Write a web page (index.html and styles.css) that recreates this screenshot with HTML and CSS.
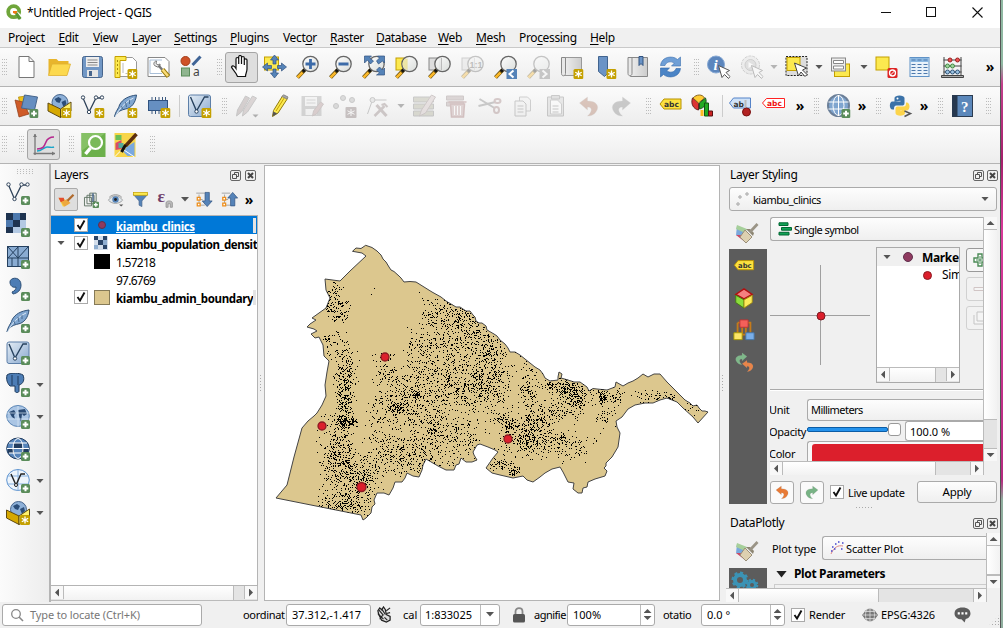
FILE: index.html
```html
<!DOCTYPE html>
<html lang="en">
<head>
<meta charset="utf-8">
<title>QGIS</title>
<link rel="stylesheet" href="styles.css">
</head>
<body>
<svg class="defs" width="0" height="0">
  <defs>
    <linearGradient id="lens" x1="0" y1="0" x2="1" y2="1"><stop offset="0" stop-color="#fff"/><stop offset="1" stop-color="#d5d9d6"/></linearGradient>
    <linearGradient id="blue" x1="0" y1="0" x2="1" y2="1"><stop offset="0" stop-color="#e4edf5"/><stop offset="1" stop-color="#8aa9cf"/></linearGradient>
    <linearGradient id="page" x1="0" y1="0" x2="1" y2="0"><stop offset="0" stop-color="#eee"/><stop offset="1" stop-color="#ccc"/></linearGradient>
  </defs>
</svg>
<svg class="symbols">
  <symbol id="plus" viewBox="0 0 24 24"><rect x="15" y="15" width="9" height="9" rx="1.5" fill="#5a8c5a"/><path d="M19.5 16.7v5.6M16.7 19.5h5.6" stroke="#fff" stroke-width="2"/></symbol>
  <symbol id="star" viewBox="0 0 24 24"><rect x="14" y="14" width="10" height="10" rx="1.5" fill="#c4a000"/><path d="M19 15.500v7M15.800 17.200l6.400 3.600M22.200 17.200l-6.400 3.600" stroke="#fff" stroke-width="1.300"/></symbol>
  <symbol id="new" viewBox="0 0 24 24"><path d="M4.500 1.500h10l5 5v16h-15zM14.500 1.500v5h5" fill="#fff" stroke="#777"/></symbol>
  <symbol id="open" viewBox="0 0 24 24"><path d="M1 20V4h8l2 2h10v4" fill="#e8b52c"/><path d="M1 20.500L4.500 9H23l-3.500 11.500z" fill="#fcd94f" stroke="#e0b030" stroke-width=".8"/></symbol>
  <symbol id="save" viewBox="0 0 24 24"><rect x="2" y="1.500" width="20" height="21" rx="2" fill="#7197c5" stroke="#47658c"/><rect x="5.500" y="2" width="13" height="10" fill="#eee"/><path d="M7 5h10M7 7.500h10M7 10h10" stroke="#888"/><path d="M6.500 15h11v7h-11z" fill="#e5e5e5"/><path d="M8.500 16h3v5h-3z" fill="#47658c"/></symbol>
  <symbol id="layout" viewBox="0 0 24 24"><path d="M5 2.500h14l4 4v15H5z" fill="#fff" stroke="#999"/><path d="M1.500 1.500h11v4h-6v17h-5z" fill="#fce94f" stroke="#c4a000"/><path d="M4 5v2M4 9v2M4 13v2M4 17v2" stroke="#a88a10"/><path d="M9.500 8v10M12 18.500h2" stroke="#bbb"/><use href="#star"/></symbol>
  <symbol id="layoutmgr" viewBox="0 0 24 24"><path d="M1.500 2.500h17l4 4v15h-21z" fill="#fff" stroke="#888"/><path d="M3.500 5h12M3.500 18.500h12M3.500 5v13.500" stroke="#a9bfd8"/><path d="M8 10.500c-1.500-2 0-4.500 2-4.500l-.5 2.500 2 1.500 2-1c.5 2-1 3-2.500 3z" fill="#eee" stroke="#777" stroke-width="1"/><path d="M12 10.500l4 4.500" stroke="#777" stroke-width="2.500"/><path d="M16 14.500l6 7" stroke="#9a7d10" stroke-width="4.500"/><path d="M16 14.500l5.500 6.500" stroke="#fbdc78" stroke-width="2.500"/></symbol>
  <symbol id="style" viewBox="0 0 24 24"><circle cx="6" cy="6" r="4.500" fill="#cf5228" stroke="#a23c18"/><path d="M13 10l8-8.500" stroke="#3f6496" stroke-width="3"/><rect x="2" y="13" width="8" height="8" fill="#8fb58f" stroke="#5a8c5a"/><text x="13.500" y="21" class="ga">a</text></symbol>
  <symbol id="hand" viewBox="0 0 24 24"><path d="M7.500 21.500C6 17 2 14 1.500 12c1-2 3-1 4.500 1.500V4c0-2 2.500-2 2.700 0v5-7c0-2 2.800-2 2.800 0v7-6c0-2 2.800-2 2.800 0v7-5c0-1.600 2.700-1.600 2.700 0v9c0 3-1.500 4.500-1.500 7.500z" fill="#fff" stroke="#111" stroke-width="1.200"/></symbol>
  <symbol id="pansel" viewBox="0 0 24 24"><rect x="2" y="2" width="14" height="13" fill="#fce94f" stroke="#c4a000"/><path d="M12 0l4 5h-2.500v4h-3V5H8zM12 23l4-5h-2.500v-4h-3v4H8zM0 12l5-4v2.500h4v3H5V16zM24 12l-5-4v2.500h-4v3h4V16z" fill="#5583b8" stroke="#30527f" stroke-width=".7"/></symbol>
  <symbol id="glass" viewBox="0 0 24 24"><path d="M9.500 14.500L2 22.500" stroke="#5f4a10" stroke-width="4"/><path d="M7 17.500L2 22.500" stroke="#fbb829" stroke-width="2.500"/><path d="M9.500 14.500l-2 2" stroke="#111" stroke-width="3"/><circle cx="15" cy="9" r="7.700" fill="url(#lens)" fill-opacity=".85" stroke="#666" stroke-width="1.300"/></symbol>
  <symbol id="zin" viewBox="0 0 24 24"><use href="#glass"/><path d="M15 4v10M10 9h10" stroke="#3c6ba8" stroke-width="2.800"/></symbol>
  <symbol id="zout" viewBox="0 0 24 24"><use href="#glass"/><path d="M10 9h10" stroke="#3c6ba8" stroke-width="3"/></symbol>
  <symbol id="zfull" viewBox="0 0 24 24"><use href="#glass"/><path d="M3 1h7L8 3l4 3-3 3-3-4-3 3zM23 1v7l-2-2-4 3-2-3 3-3-2-2zM23 20h-8l3-2-3-3 3-3 3 3 2-2z" fill="#5583b8" stroke="#30527f" stroke-width=".7"/></symbol>
  <symbol id="zsel" viewBox="0 0 24 24"><rect x="1.500" y="3" width="11" height="12" fill="#fce94f" stroke="#c4a000"/><use href="#glass"/><path d="M10 4h3v11c-3-1-5-4-5-6s1-4 2-5z" fill="#eadf90" opacity=".7"/></symbol>
  <symbol id="zlay" viewBox="0 0 24 24"><rect x="1.500" y="3" width="11" height="12" fill="#ddd" stroke="#888"/><use href="#glass"/><path d="M14 3v12" stroke="#bbb"/></symbol>
  <symbol id="z11" viewBox="0 0 24 24"><use href="#zlay"/><text x="9" y="12.500" class="g11">1:1</text></symbol>
  <symbol id="zlast" viewBox="0 0 24 24"><use href="#glass"/><rect x="13" y="14" width="10.500" height="10" fill="#5583b8"/><path d="M20 15.500l-4 3.500 4 3.500" fill="none" stroke="#fff" stroke-width="2"/></symbol>
  <symbol id="znext" viewBox="0 0 24 24"><use href="#glass"/><rect x="13" y="14" width="10.500" height="10" fill="#777"/><path d="M16 15.500l4 3.500-4 3.500" fill="none" stroke="#fff" stroke-width="2"/></symbol>
  <symbol id="mapview" viewBox="0 0 24 24"><path d="M5 2.500h17v18H5z" fill="url(#page)" stroke="#999"/><path d="M2 2.500h4v16c0 3-4 3-4 0z" fill="#e8e8e8" stroke="#888"/><use href="#star"/></symbol>
  <symbol id="bm" viewBox="0 0 24 24"><path d="M6 1.500h9v17l-3 3-6-5z" fill="#6a93c6" stroke="#41648f"/><use href="#star"/></symbol>
  <symbol id="bm2" viewBox="0 0 24 24"><path d="M5 2.500h17v19H5z" fill="url(#page)" stroke="#888"/><path d="M2.500 2.500h4v16c0 3-4 3-4 0z" fill="#e8e8e8" stroke="#888"/><path d="M13.500 1.500h4v9l-2-2-2 2z" fill="#6a93c6" stroke="#30527f"/></symbol>
  <symbol id="refresh" viewBox="0 0 24 24"><path d="M2 10.500C3 1.500 14 0 19 4.500l3-2.500V11H13l2.700-2.700C12.500 5.500 7.500 7 6.500 10.500z" fill="#6f9fd6" stroke="#3a6fae" stroke-width=".6"/><path d="M22 13.500c-1 9-12 10.500-17 6l-3 2.500V13H11l-2.700 2.700c3.200 2.800 8.200 1.300 9.200-2.200z" fill="#4a84c6" stroke="#2e64a8" stroke-width=".6"/></symbol>
  <symbol id="arrow" viewBox="0 0 24 24"><path d="M12 10.500l3.500 12 2.500-3 4 4 1.500-2-4-4 3.500-2z" fill="#fff" stroke="#555"/></symbol>
  <symbol id="info" viewBox="0 0 24 24"><circle cx="9.500" cy="9.500" r="8.500" fill="#5c86bd" stroke="#86a8d3"/><text x="7" y="15" class="gi">i</text><use href="#arrow"/></symbol>
  <symbol id="action" viewBox="0 0 24 24"><circle cx="11" cy="10" r="9" fill="#ddd" stroke="#888" stroke-dasharray="3 1"/><circle cx="11" cy="10" r="5.500" fill="#bbb" stroke="#888"/><path d="M9 7l5 3-5 3z" fill="#fff"/><use href="#arrow"/></symbol>
  <symbol id="select" viewBox="0 0 24 24"><rect x="1.500" y="1.500" width="21" height="19" fill="#ddd" stroke="#222" stroke-dasharray="2 1.200"/><rect x="2.500" y="2.500" width="13" height="13" fill="#fce94f" stroke="#c4a000"/><path d="M10 8l4 13 2.500-4 4 4.500 2-2-4.500-4.500L22 13z" fill="#fff" stroke="#444"/></symbol>
  <symbol id="selform" viewBox="0 0 24 24"><rect x="5" y="9" width="15" height="12.500" fill="#fce94f" stroke="#c4a000"/><rect x="2" y="3" width="14" height="13" fill="#eee" stroke="#888"/><path d="M4 5.500h10v3H4zM4 11h10v3H4z" fill="#fff" stroke="#888"/></symbol>
  <symbol id="desel" viewBox="0 0 24 24"><rect x="1.500" y="2" width="13" height="13" fill="#fce94f" stroke="#c4a000"/><rect x="13" y="13" width="10" height="10" rx="1.500" fill="#d22"/><circle cx="18" cy="18" r="3" fill="none" stroke="#fff" stroke-width="1.300"/><path d="M16 20l4-4" stroke="#fff"/></symbol>
  <symbol id="table" viewBox="0 0 24 24"><rect x="2.500" y="2.500" width="19" height="19" fill="#e9f2fa" stroke="#5f92c6"/><rect x="3" y="3" width="18" height="4" fill="#8cb9e2"/><path d="M4 5h4M10 5h4M16 5h4M4 9.500h4M10 9.500h4M16 9.500h4M4 12.500h4M10 12.500h4M16 12.500h4M4 15.500h4M10 15.500h4M16 15.500h4M4 18.500h4M10 18.500h4M16 18.500h4" stroke="#4c79ad"/></symbol>
  <symbol id="abacus" viewBox="0 0 24 24"><path d="M3.500 2v18M20.500 2v18M3 5h18M3 11h18M3 17h18" stroke="#444"/><path d="M1 20.500h22v2H1z" fill="#aaa" stroke="#444"/><g fill="#e55" stroke="#922"><circle cx="9.500" cy="5" r="2"/><circle cx="17" cy="5" r="2"/></g><g fill="#9cd49c" stroke="#484"><circle cx="7" cy="11" r="2"/><circle cx="12" cy="11" r="2"/></g><g fill="#9cc4e4" stroke="#357"><circle cx="7" cy="17" r="2"/><circle cx="12" cy="17" r="2"/><circle cx="17" cy="17" r="2"/></g></symbol>
  <symbol id="dsm" viewBox="0 0 24 24"><path d="M4 3l8-1 4 13-9 3z" fill="#f0c419" stroke="#ad8500" stroke-width=".7"/><path d="M.5 6l8 2 6 12-10 3z" fill="#cf5b28" stroke="#8c3a14" stroke-width=".7"/><path d="M10 1l13 2-3 13-13-2z" fill="#668fc1" stroke="#47658c"/><use href="#plus"/></symbol>
  <symbol id="gpkg" viewBox="0 0 24 24"><circle cx="12.500" cy="8.500" r="8" fill="#8db0d8" stroke="#47658c"/><path d="M7 5l4-2 3 2-2 4-3-1zM14 8l4-2 1 4-3 3z" fill="#2b4d78"/><path d="M.5 9L13 15v8.500L.5 17z" fill="#d6a800" stroke="#5f4a10"/><path d="M13 15L23.500 8v9L13 23.500z" fill="#fff16e" stroke="#5f4a10"/><use href="#star"/></symbol>
  <symbol id="vee" viewBox="0 0 24 24"><path d="M2.500 4l6 14 7-14h6" fill="none" stroke="#30435a" stroke-width="1.300"/><g fill="#fff" stroke="#30435a"><circle cx="2.500" cy="3.500" r="1.700"/><circle cx="8.500" cy="18" r="1.700"/><circle cx="15.500" cy="3.500" r="1.700"/><circle cx="21.500" cy="3.500" r="1.700"/></g></symbol>
  <symbol id="veestar" viewBox="0 0 24 24"><use href="#vee"/><use href="#star"/></symbol>
  <symbol id="veeplus" viewBox="0 0 24 24"><use href="#vee"/><use href="#plus"/></symbol>
  <symbol id="feather" viewBox="0 0 24 24"><path d="M1 23c1-6 4-8 5-12C9 5 15 2 23 1c-1 8-5 13-11 14-4 1-8 2-11 8z" fill="#7fa5cf" stroke="#2f5178"/><path d="M1.500 23C6 14 12 8 20 4" stroke="#dde9f5" fill="none"/><path d="M8 12l1 3M12 8l1 5M16 6v4" stroke="#2f5178" stroke-width=".7"/></symbol>
  <symbol id="feastar" viewBox="0 0 24 24"><use href="#feather"/><use href="#star"/></symbol>
  <symbol id="feaplus" viewBox="0 0 24 24"><use href="#feather"/><use href="#plus"/></symbol>
  <symbol id="chip" viewBox="0 0 24 24"><path d="M5.500 3v17M9 3v17M12.500 3v17M16 3v17M19 3v17" stroke="#3c5a80"/><rect x="2" y="6.500" width="19" height="10" fill="#668fc1" stroke="#30527f"/><use href="#star"/></symbol>
  <symbol id="virt" viewBox="0 0 24 24"><rect x="1" y="1" width="22" height="21.500" rx="2" fill="url(#blue)" stroke="#5d7fa8"/><path d="M3 3l6 14 8-14h4" fill="none" stroke="#27425f" stroke-width="1.400"/><circle cx="9" cy="17.500" r="1.700" fill="#fff" stroke="#27425f"/></symbol>
  <symbol id="virtstar" viewBox="0 0 24 24"><use href="#virt"/><use href="#star"/></symbol>
  <symbol id="virtplus" viewBox="0 0 24 24"><use href="#virt"/><use href="#plus"/></symbol>
  <symbol id="pencils" viewBox="0 0 24 24"><path d="M2 22l1-6 8-14 4 2-8 14z" fill="#988" stroke="#777"/><path d="M8 22l1-6 9-14 4 2-9 14z" fill="#a99" stroke="#777"/><path d="M18 20.500h6l-3 3z" fill="#333"/></symbol>
  <symbol id="pencil" viewBox="0 0 24 24"><path d="M5 22.500l1-6L15 2l5 2.500L10.500 19z" fill="#fce94f" stroke="#8f7a10"/><path d="M8.500 17L17 3.500" stroke="#c4a000"/><path d="M5 22.500l.8-5 4 2z" fill="#555"/><path d="M14.500 2.500L16 .8 20.500 3l-1 2z" fill="#aaa" stroke="#888"/></symbol>
  <symbol id="saveed" viewBox="0 0 24 24"><path d="M1 2h20v20H1z" fill="#999"/><path d="M4.500 3h12v9h-12zM5 15h11v6H5z" fill="#eee"/><path d="M6 6h9M6 9h9" stroke="#999"/><path d="M12 22l1-5 7-9 3 2-7 10z" fill="#a88" stroke="#877"/></symbol>
  <symbol id="points" viewBox="0 0 24 24"><g fill="#aaa" stroke="#777"><circle cx="2.500" cy="12" r="2.500"/><circle cx="9.500" cy="4" r="2.500"/><circle cx="18.500" cy="6" r="2.500"/></g><rect x="12" y="13" width="11" height="11" rx="1" fill="#766"/><path d="M17.500 15v7M14 16.800l7 3.500M21 16.800l-7 3.500" stroke="#fff"/></symbol>
  <symbol id="vertex" viewBox="0 0 24 24"><path d="M1 20L6 6h14" stroke="#777" fill="none"/><circle cx="6" cy="6" r="2.500" fill="#ccc" stroke="#777"/><path d="M10 11l10 11" stroke="#877" stroke-width="3"/><path d="M18 12L8 22" stroke="#877" stroke-width="2.500"/><path d="M15 11l3-1 3 3" stroke="#877" stroke-width="2" fill="none"/></symbol>
  <symbol id="editrows" viewBox="0 0 24 24"><path d="M2 3h20v5H2zM2 10h20v5H2zM2 17h20v5H2z" fill="#a8a890" stroke="#777"/><path d="M8 22l2-6L20 1l4 2-10 16z" fill="#cbb" stroke="#877"/></symbol>
  <symbol id="trash" viewBox="0 0 24 24"><path d="M2 2h17v4H2zM2 8h17v4H2z" fill="#a99" stroke="#877"/><path d="M4 8h18M6 10h14l-1 13H7z" fill="#b99" stroke="#966" stroke-width="1.500"/><path d="M10 12v9M13 12v9M16 12v9" stroke="#fff"/></symbol>
  <symbol id="cut" viewBox="0 0 24 24"><path d="M2 5l15 9M1 12l17-4" stroke="#777" stroke-width="2"/><g fill="none" stroke="#977" stroke-width="2"><ellipse cx="20" cy="7" rx="3" ry="2"/><ellipse cx="19" cy="16" rx="2.500" ry="3"/></g></symbol>
  <symbol id="copy" viewBox="0 0 24 24"><path d="M9 3h8l3 3v11H9z" fill="#eee" stroke="#888"/><path d="M4.500 7h8l3 3v12h-11z" fill="#eee" stroke="#777"/><path d="M7 12h6M7 15h6M7 18h6" stroke="#777"/></symbol>
  <symbol id="paste" viewBox="0 0 24 24"><path d="M4 3h16v19H4z" fill="#ccc" stroke="#777"/><path d="M7 6h7l4 4v10H7z" fill="#fff" stroke="#888"/><path d="M8 1.500h8V5H8z" fill="#bbb" stroke="#777"/><path d="M9 12h6M9 15h6M9 18h6" stroke="#777"/></symbol>
  <symbol id="undo" viewBox="0 0 24 24"><path d="M3 9l8-6v4c9 0 12 5 9 10-2 4-6 5-9 5 4-3 6-9 0-9v3z" fill="currentColor" stroke="#8886" stroke-width=".6"/></symbol>
  <symbol id="redo" viewBox="0 0 24 24"><path d="M21 9l-8-6v4C4 7 1 12 4 17c2 4 6 5 9 5-4-3-6-9 0-9v3z" fill="currentColor" stroke="#8886" stroke-width=".6"/></symbol>
  <symbol id="tag" viewBox="0 0 24 24"><path d="M1.500 10l4-5h17v10h-17z" fill="#fce13f" stroke="#b89200"/><text x="5.500" y="13" class="gt">abc</text></symbol>
  <symbol id="diag" viewBox="0 0 24 24"><path d="M7 9L1 4c-2 6 1 11 6 12z" fill="#d33" stroke="#622"/><path d="M7 9L1.500 4C5 0 11 0 13 4z" fill="#fc3" stroke="#862"/><path d="M8 9l6-5c2 5-1 10-6 11z" fill="#2a2" stroke="#252"/><path d="M9 16h3v6H9z" fill="#fb2"/><path d="M13 9h4v13h-4z" fill="#2a2" stroke="#151"/><path d="M17 17h4v5h-4z" fill="#c22" stroke="#511"/></symbol>
  <symbol id="tagpin" viewBox="0 0 24 24"><path d="M1 9l4-5h17v10H5z" fill="#cfe2f8" stroke="#5583c8"/><text x="5" y="12.500" class="gt">ab</text><path d="M17 6v10" stroke="#bbb" stroke-width="2"/><circle cx="18" cy="18" r="4" fill="#b22222" stroke="#7a1010"/></symbol>
  <symbol id="tagred" viewBox="0 0 24 24"><path d="M1 9l4-4.500h18v9H5z" fill="#fff" stroke="#f22"/><text x="5.500" y="12" class="gr">abc</text></symbol>
  <symbol id="globe" viewBox="0 0 24 24"><circle cx="12" cy="11.500" r="10.500" fill="#7fa5cf" stroke="#6b7f98" stroke-width="2"/><path d="M12 1v21M2 8h20M2 15h20" stroke="#fff"/><ellipse cx="12" cy="11.500" rx="5.500" ry="10" fill="none" stroke="#fff"/><use href="#plus"/></symbol>
  <symbol id="python" viewBox="0 0 24 24"><path d="M6 7.500V4c0-3.500 10-3.500 10 0v5c0 2-1 2.500-3 2.500H8c-2 0-2.500 1-2.500 4H4C.5 15.500.5 7.500 4 7.500h8v-.7z" fill="#3b72a8"/><path d="M16.500 15v4c0 3.500-9.500 3.500-9.500 0v-4c0-2 1-2.500 3-2.500h5c2 0 2.500-1 2.500-4H18c4 0 4 8 0 8h-6v.7z" fill="#fcd44b"/><circle cx="9" cy="4.500" r="1" fill="#fff"/><path d="M16 17l6 2.500-6 3" fill="none" stroke="#555" stroke-width="1.500"/></symbol>
  <symbol id="help" viewBox="0 0 24 24"><rect x="2" y="1.500" width="20" height="21" fill="#5b87ba" stroke="#2b3b50"/><path d="M2 1.500h5v21H2z" fill="#26384f"/><text x="10.500" y="17.500" class="gq">?</text></symbol>
  <symbol id="plot" viewBox="0 0 24 24"><path d="M3 22V1M1.500 20.500H23" stroke="#777" stroke-width="1.300"/><path d="M1 4l2-3 2 3zM20 18.500l3 2-3 2z" fill="#777"/><path d="M5 18c5 0 7-4 10-4 3 0 5 1 7 0" stroke="#19a5c9" stroke-width="1.400" fill="none"/><path d="M5 16c6 0 7-2 9-7 1.500-4 4-5 8-5" stroke="#b5288e" stroke-width="1.600" fill="none"/></symbol>
  <symbol id="greenq" viewBox="0 0 24 24"><rect width="24" height="24" fill="#6cb04b"/><path d="M0 0h24L0 18z" fill="#86c166"/><path d="M9 15l-5 6" stroke="#fff" stroke-width="3.500"/><circle cx="14" cy="9.500" r="6.500" fill="#7ab95a" stroke="#fff" stroke-width="2.200"/></symbol>
  <symbol id="osm" viewBox="0 0 24 24"><rect width="21" height="24" fill="#f7d549"/><path d="M1 2h6v5H1z" fill="#6abf59"/><path d="M1 10l6-3v9l-6 1z" fill="#d94b6a"/><path d="M4 10h5v5H4z" fill="#5a9"/><path d="M12 14l8-5v14h-7l-4-4z" fill="#79a8e0"/><path d="M0 24l8-8 12 8" stroke="#fff" fill="none"/><path d="M22 1L11 13" stroke="#5b2e10" stroke-width="3.500"/><path d="M11 12l-4 7" stroke="#111" stroke-width="3"/></symbol>
  <symbol id="rasplus" viewBox="0 0 24 24"><rect width="20" height="20" fill="#b3c9e3"/><path d="M0 0h7v7H0zM14 0h6v7h-6zM7 7h7v7H7zM0 14h7v6H0z" fill="#1e3350"/><path d="M7 0h7v7H7zM0 7h7v7H0z" fill="#4d79ae"/><use href="#plus"/></symbol>
  <symbol id="mesh" viewBox="0 0 24 24"><rect x="1.500" y="1.500" width="21" height="20" fill="#8aacd2" stroke="#25405f"/><path d="M12 1.500v20M1.500 13h21M2 2l10 11M12 2L2 13M12 13L22 2M6 13v9" stroke="#25405f"/><use href="#plus"/></symbol>
  <symbol id="comma" viewBox="0 0 24 24"><path d="M4 5c0-5 11-6 11 3 0 5-3 8-8 9l-1-2c3-1 4-3 4-5-3 1-6-1-6-5z" fill="#4d7db5" stroke="#2e5077"/><use href="#plus"/></symbol>
  <symbol id="eleph" viewBox="0 0 24 24"><path d="M1 2c4-3 13-2 16 0 2 5 0 9-4 10v6c0 2-4 2-4 0v-5H4C1 10 0 6 1 2z" fill="#4d7db5" stroke="#1f3b5c"/><path d="M6 2v10M12 3v9" stroke="#1f3b5c"/><use href="#plus"/></symbol>
  <symbol id="wms" viewBox="0 0 24 24"><ellipse cx="12" cy="11" rx="11.300" ry="10.500" fill="#aac5e4" stroke="#5c86b5"/><path d="M3 7l5-2 2 3-2 2 1 4-3-2zM12 5l7-1 2 5-3 2-2-2-1 8-2-6z" fill="#294a73"/><path d="M12 1v21M1 8h22M1 14h22" stroke="#dbe8f5" stroke-width=".7"/><use href="#plus"/></symbol>
  <symbol id="wcs" viewBox="0 0 24 24"><ellipse cx="12" cy="11.500" rx="11.300" ry="10.500" fill="#5684ba" stroke="#223d5f"/><path d="M8 6h8v5H8zM2 11h6v5H2zM16 11h6v5h-6z" fill="#223d5f"/><path d="M1 11.500h22M3 6h18M3 16h18" stroke="#fff" stroke-width="1.200"/><ellipse cx="12" cy="11.500" rx="5" ry="10" fill="none" stroke="#fff"/><use href="#plus"/></symbol>
  <symbol id="wfs" viewBox="0 0 24 24"><ellipse cx="12" cy="11" rx="11.300" ry="10.500" fill="#eef5fc" stroke="#5e93cf"/><path d="M1 7h22M1 15h22M12 1v21" stroke="#86b0dd"/><path d="M5 5l5 11 5-11h4" fill="none" stroke="#222" stroke-width="1.400"/><circle cx="10" cy="16" r="1.500" fill="#fff" stroke="#222"/><use href="#plus"/></symbol>
  <symbol id="brush" viewBox="0 0 24 24"><path d="M2 5l9 4-2 10-8-5z" fill="#7aa8dc"/><path d="M2 4l10 4-2 4-9-4z" fill="#a6cf9a"/><path d="M1 14h9l0 7z" fill="#cc4a64"/><path d="M10 9l7 7-6 6-6-6z" fill="#ddd0b0" stroke="#9a8f78"/><path d="M11 8l7 7 1-3-4-4z" fill="#8d8673"/><path d="M15 11l7.500-8" stroke="#9a9486" stroke-width="2.800"/></symbol>
  <symbol id="brushl" viewBox="0 0 24 24"><path d="M2 9l8 2 6 6-8 4z" fill="#f6d23c"/><path d="M2 9h7l1 4-5 2z" fill="#e34f2c"/><path d="M6 15l7-4 5 5-8 5z" fill="#eda83f"/><path d="M14 13l8-8" stroke="#b06a2c" stroke-width="3"/></symbol>
  <symbol id="group" viewBox="0 0 24 24"><path d="M3.500 9h10v12h-10zM7 6h10v12H7zM11 3h9v12h-9z" fill="none" stroke="#5f7263" stroke-width="1.300"/><path d="M15.500 3v12" stroke="#47658c" stroke-width="2"/><use href="#plus"/></symbol>
  <symbol id="eye" viewBox="0 0 24 24"><path d="M2 13c5-8 15-8 20 0-5 6-15 6-20 0z" fill="#dfe6ea" stroke="#888"/><circle cx="12" cy="12" r="4.500" fill="#5583b8"/><circle cx="12" cy="12" r="2" fill="#222"/><path d="M3 9c5-5 13-5 18 0" fill="none" stroke="#777"/><path d="M17 19h6l-3 3z" fill="#555"/></symbol>
  <symbol id="funnel" viewBox="0 0 24 24"><path d="M2 5h20l-8 9v8l-4-2v-6z" fill="#5583b8" stroke="#47658c"/><rect x="2" y="2" width="20" height="4" fill="#fce94f" stroke="#c4a000"/></symbol>
  <symbol id="eps" viewBox="0 0 24 24"><text x="0" y="15" class="ge">ε</text><path d="M12 23v-6c0-4 9-4 9 0v6h-3v-5h-3v5z" fill="#bbb" stroke="#888"/></symbol>
  <symbol id="expand" viewBox="0 0 24 24"><path d="M1 3h12M5 5v16M5 12h5M5 20h8" stroke="#888"/><path d="M2.500 9h4v4h-4zM2.500 17h4v4h-4z" fill="#fff" stroke="#ee8e1b" stroke-width="1.800"/><path d="M13.500 2h6v12h4L16.500 22 9.500 14h4z" fill="#5583b8" stroke="#30527f"/></symbol>
  <symbol id="collapse" viewBox="0 0 24 24"><path d="M1 3h12M5 5v16M5 12h5M5 20h8" stroke="#888"/><path d="M2.500 9h4v4h-4zM2.500 17h4v4h-4z" fill="#fff" stroke="#ee8e1b" stroke-width="1.800"/><path d="M13.500 21h6V10h4L16.500 2 9.500 10h4z" fill="#5583b8" stroke="#30527f"/></symbol>
  <symbol id="ras" viewBox="0 0 14 14"><rect width="14" height="14" fill="#d3deeb"/><path d="M0 0h4v4H0zM9 0h4v4H9zM4 4h5v5H4zM9 9h4v4H9z" fill="#2a4568"/><path d="M0 9h4v4H0zM9 4h4v5H9z" fill="#8faed0"/></symbol>
  <symbol id="cube" viewBox="0 0 24 24"><path d="M12 2l9 6-9 5-9-5z" fill="#f58080" stroke="#b01010" stroke-width="1.500"/><path d="M3 9l9 5v9l-9-6z" fill="#8bdd3c" stroke="#447a10"/><path d="M21 9l-9 5v9l9-6z" fill="#fcea5a" stroke="#a08a10"/></symbol>
  <symbol id="tree3" viewBox="0 0 24 24"><path d="M5 4h14v16M5 4v16M10 8v9h4V8" stroke="#c47a1a" stroke-width="2" fill="none"/><path d="M7.500 1h9v8h-9z" fill="#f4605a" stroke="#b33"/><path d="M1 15h9v7.500H1z" fill="#fce568" stroke="#a90"/><path d="M14 15h9v7.500h-9z" fill="#7aaee8" stroke="#47a"/></symbol>
  <symbol id="gears" viewBox="0 0 38 20"><g fill="none" stroke="#3b93b5"><circle cx="11" cy="12" r="5" stroke-width="4"/><circle cx="11" cy="12" r="7.300" stroke-width="2.500" stroke-dasharray="3 2.700"/><circle cx="23" cy="17" r="3.500" stroke-width="3"/><circle cx="23" cy="17" r="5.300" stroke-width="2" stroke-dasharray="2.200 2"/></g></symbol>
  <symbol id="float" viewBox="0 0 11 11"><rect x=".5" y=".5" width="10" height="10" rx="1.500" fill="none" stroke="#666"/><path d="M4.500 4.500v-2h4v4h-2M2.500 4.500h4v4h-4z" fill="none" stroke="#555"/></symbol>
  <symbol id="close" viewBox="0 0 11 11"><rect x=".5" y=".5" width="10" height="10" rx="1.500" fill="none" stroke="#666"/><path d="M3 3l5 5M8 3L3 8" stroke="#444" stroke-width="2"/></symbol>
  <symbol id="check" viewBox="0 0 14 14"><rect x=".5" y=".5" width="13" height="13" fill="#fff" stroke="#aaa"/><path d="M3.500 7l2.500 3.500 4.500-8" stroke="#111" stroke-width="1.900" fill="none"/></symbol>
</svg>

<div class="screen">
<div class="window">
  <header class="titlebar">
    <svg class="logo" viewBox="0 0 16 16"><circle cx="7.700" cy="7.700" r="5.500" fill="none" stroke="#6fa53a" stroke-width="3.800"/><path d="M8 8h4l4 4v4h-3z" fill="#fff"/><path d="M8 8h3l4.500 6-1.500 1.500h-2z" fill="#589632"/><path d="M7 7h4v1.500L9.500 10 7 9z" fill="#ee7913"/></svg>
    <span class="title">*Untitled Project - QGIS</span>
    <svg class="winbtns" viewBox="0 0 120 28"><path d="M11 12.500h10M102.500 7.500l10 10M112.500 7.500l-10 10" stroke="#111" fill="none" stroke-width="1.100"/><rect x="56.500" y="7.500" width="9" height="9" fill="none" stroke="#111"/></svg>
  </header>
  <nav class="menubar">
    <span>Pro<u>j</u>ect</span><span><u>E</u>dit</span><span><u>V</u>iew</span><span><u>L</u>ayer</span><span><u>S</u>ettings</span><span><u>P</u>lugins</span><span>Vect<u>o</u>r</span><span><u>R</u>aster</span><span><u>D</u>atabase</span><span><u>W</u>eb</span><span><u>M</u>esh</span><span>Pro<u>c</u>essing</span><span><u>H</u>elp</span>
  </nav>

  <div class="bar">
    <i class="g w10"></i>
    <svg class="c"><use href="#new"/></svg><svg class="c"><use href="#open"/></svg><svg class="c"><use href="#save"/></svg><svg class="c"><use href="#layout"/></svg><svg class="c"><use href="#layoutmgr"/></svg><svg class="c"><use href="#style"/></svg>
    <i class="g w17"></i>
    <span class="btn"><svg class="i24"><use href="#hand"/></svg></span><svg class="c"><use href="#pansel"/></svg><svg class="c"><use href="#zin"/></svg><svg class="c"><use href="#zout"/></svg><svg class="c"><use href="#zfull"/></svg><svg class="c"><use href="#zsel"/></svg><svg class="c"><use href="#zlay"/></svg><svg class="c off"><use href="#z11"/></svg><svg class="c"><use href="#zlast"/></svg><svg class="c off"><use href="#znext"/></svg><svg class="c"><use href="#mapview"/></svg><svg class="c"><use href="#bm"/></svg><svg class="c"><use href="#bm2"/></svg><svg class="c"><use href="#refresh"/></svg>
    <i class="g w15"></i>
    <svg class="c"><use href="#info"/></svg><svg class="c off"><use href="#action"/></svg><i class="a dim"></i><svg class="c"><use href="#select"/></svg><i class="a"></i><svg class="c"><use href="#selform"/></svg><i class="a"></i><svg class="c"><use href="#desel"/></svg><svg class="c"><use href="#table"/></svg><svg class="c"><use href="#abacus"/></svg>
    <b class="more last">»</b>
  </div>
  <div class="bar">
    <i class="g w10"></i>
    <svg class="c"><use href="#dsm"/></svg><svg class="c"><use href="#gpkg"/></svg><svg class="c"><use href="#veestar"/></svg><svg class="c"><use href="#feastar"/></svg><svg class="c"><use href="#chip"/></svg><i class="s"></i><svg class="c"><use href="#virtstar"/></svg>
    <i class="g w14"></i>
    <svg class="c off"><use href="#pencils"/></svg><svg class="c"><use href="#pencil"/></svg><svg class="c off"><use href="#saveed"/></svg><svg class="c off"><use href="#points"/></svg><svg class="c off"><use href="#vertex"/></svg><i class="a dim"></i><svg class="c off"><use href="#editrows"/></svg><svg class="c off"><use href="#trash"/></svg><svg class="c off"><use href="#cut"/></svg><svg class="c off"><use href="#copy"/></svg><svg class="c off"><use href="#paste"/></svg><svg class="c off brown"><use href="#undo"/></svg><svg class="c off grey"><use href="#redo"/></svg>
    <i class="g w16"></i>
    <svg class="c"><use href="#tag"/></svg><svg class="c"><use href="#diag"/></svg><i class="s thin"></i><svg class="c"><use href="#tagpin"/></svg><svg class="c"><use href="#tagred"/></svg><b class="more wide">»</b>
    <i class="g w12"></i><svg class="c"><use href="#globe"/></svg><b class="more">»</b>
    <i class="g w15"></i><svg class="c"><use href="#python"/></svg><b class="more">»</b>
    <i class="g w15"></i><svg class="c"><use href="#help"/></svg><i class="g w15"></i>
  </div>
  <div class="bar">
    <i class="g w10"></i><i class="g w17"></i><span class="btn"><svg class="i24"><use href="#plot"/></svg></span><i class="g w17"></i>
    <svg class="c"><use href="#greenq"/></svg><svg class="c"><use href="#osm"/></svg><i class="g w15"></i>
  </div>

  <main class="main">
    <aside class="side">
      <i class="hg"></i>
      <div class="tool"><svg class="i24"><use href="#veeplus"/></svg></div>
      <div class="tool"><svg class="i24"><use href="#rasplus"/></svg></div>
      <div class="tool"><svg class="i24"><use href="#mesh"/></svg></div>
      <div class="tool"><svg class="i24"><use href="#comma"/></svg></div>
      <div class="tool"><svg class="i24"><use href="#feaplus"/></svg></div>
      <div class="tool"><svg class="i24"><use href="#virtplus"/></svg></div>
      <div class="tool"><svg class="i24"><use href="#eleph"/></svg><i class="a"></i></div>
      <div class="tool"><svg class="i24"><use href="#wms"/></svg><i class="a"></i></div>
      <div class="tool"><svg class="i24"><use href="#wcs"/></svg></div>
      <div class="tool"><svg class="i24"><use href="#wfs"/></svg><i class="a"></i></div>
      <div class="tool"><svg class="i24"><use href="#gpkg"/></svg><i class="a"></i></div>
    </aside>

    <section class="layers">
      <div class="phead"><span>Layers</span><svg class="pb"><use href="#float"/></svg><svg class="pb"><use href="#close"/></svg></div>
      <div class="ltools">
        <span class="lbtn"><svg class="i18"><use href="#brushl"/></svg></span>
        <svg class="l"><use href="#group"/></svg><svg class="l"><use href="#eye"/></svg><svg class="l"><use href="#funnel"/></svg><svg class="l wl"><use href="#eps"/></svg><i class="a"></i><svg class="l wl"><use href="#expand"/></svg><svg class="l"><use href="#collapse"/></svg><b class="more">»</b>
      </div>
      <div class="tree">
        <div class="row sel"><i class="exp"></i><svg class="ck"><use href="#check"/></svg><span class="sym"><i class="dot purple"></i></span><span class="nm n1"><u>kiambu_clinics</u></span><i class="edge"></i></div>
        <div class="row"><i class="exp a"></i><svg class="ck"><use href="#check"/></svg><span class="sym"><svg class="i14"><use href="#ras"/></svg></span><span class="nm n2">kiambu_population_densit</span><i class="edge"></i></div>
        <div class="row"><i class="exp"></i><i class="ck"></i><span class="sym"><i class="sw black"></i></span><span class="val">1.57218</span></div>
        <div class="row"><i class="exp"></i><i class="ck"></i><span class="sym"></span><span class="val">97.6769</span></div>
        <div class="row"><i class="exp"></i><svg class="ck"><use href="#check"/></svg><span class="sym"><i class="sw tan"></i></span><span class="nm n3">kiambu_admin_boundary</span><i class="edge"></i></div>
      </div>
      <div class="hs"><i class="sb left"></i><i class="thumb"></i><i class="trk w10"></i><i class="sb right"></i></div>
    </section>
    <div class="split"><i class="vdots"></i></div>

    <section class="map">
      <svg class="canvas" viewBox="265 166 454 434">
        <clipPath id="shape"><use href="#county"/></clipPath>
        <path id="county" fill="#dcc78e" stroke="#444" stroke-width="1" d="M352.500 251.300L356 248 361 248.500 365.700 245.300 372 247.500 377 251 381 255 383 259 386 262 389 267 391 270 394 271.500 399 276 401 278 404 282 410 281.500 416 282 424 287 432 292 441 297 446 301 451 304 456 307 460 307 466 311 470 311 473 315 475 317 476 321 479 323 482 323 486 326 487 330 494 334 497 336 500 340 505 344 508 348 510 352 515 352 520 355 530 363 535 367 540 370 543 374 545 378 550 381 558 380 558 377 559 372 562 374 561 378 568 380 574 382 580 382 587 387 589 391 593 388.500 597 389 607 390 615 387 616 382 623 386 628 383 633 381 638 378 643 374 648 377 654 374 660 374 667 382 673 388 680 395 685 400 690 403 693 406 697 405 699 408 702 411 705 411 708 412 698 423 693 417 683 408 677 402 667 398 660 400 653 403 645 403 635 405 628 409 622 417 616 421 617 427 620 433 618 447 612 457 606 463 606 466 604 468 607 471 605 476 595 479 588 482 587 487 583 488 582 493 578 493 573 489 574 483 568 482 563 472 560 467 552 469 545 473 540 477 533 482 527 480 523 476 513 478 500 475 492 473 486 468 493 458 498 452 495 450 488 447 480 444 477 445 473 452 474 455 477 460 472 462 466 462 461 458 459 464 456 465 454 470 446 470 438 466 426 459 423 465 422 470 419 477 413 476 407 473 405 478 402 482 395 482 393 488 389 495 384 493 377 493 374 500 375 504 372 507 371 513 366 518 363 520 361 515 276 498 287 485 294 457 302 428 308 421 314 416 317 413 322 405 326 396 325 385 327 372 329 361 324 356 323 345 319 337 315 338 311 334 317 331 314 329 307 327 310 324 316 320 312 318 319 313 326 308 330 298 326 290 325 279 340 281 350 271 366 256 362 253Z"/>
        <path id="density" clip-path="url(#shape)" shape-rendering="crispEdges" fill="#000"/>
        <g fill="#dc1f2c" stroke="#8c1a22" stroke-width="1.300"><circle cx="385" cy="357" r="4"/><circle cx="322" cy="426" r="4"/><circle cx="361.500" cy="487" r="4.500"/><circle cx="508" cy="439" r="4"/></g>
      </svg>
    </section>
    <div class="split2"><i class="vdots"></i></div>

    <section class="right">
      <div class="phead"><span>Layer Styling</span><svg class="pb"><use href="#float"/></svg><svg class="pb"><use href="#close"/></svg></div>
      <div class="combo layer"><svg class="pts" viewBox="0 0 14 14"><g fill="#fff" stroke="#888" stroke-width=".8"><circle cx="4" cy="5" r="1.200"/><circle cx="11" cy="2" r="1.200"/><circle cx="2" cy="12" r="1.200"/></g></svg><span class="tight">kiambu_clinics</span><i class="a push"></i></div>
      <div class="styling">
        <div class="tabs">
          <div class="tabtop"><svg class="i24"><use href="#brush"/></svg></div>
          <div class="tabdark"><svg class="i22"><use href="#tag"/></svg><svg class="i24"><use href="#cube"/></svg><svg class="i24"><use href="#tree3"/></svg><svg class="i24" viewBox="0 0 24 24"><g transform="translate(1 0) scale(.68)" color="#7fb88a"><use href="#redo" width="24" height="24"/></g><g transform="translate(8 8) scale(.66)" color="#e8854a"><use href="#undo" width="24" height="24"/></g></svg></div>
        </div>
        <div class="stylecol">
          <div class="scrollrow">
            <div class="content">
              <div class="combo single"><svg class="ss" viewBox="0 0 14 14"><path d="M1 .8h9v2.700H1zM3.500 5.500h10v2.700h-10zM1 10.300h10v2.700H1z" fill="#12a156" stroke="#063"/></svg><span class="tight">Single symbol</span></div>
              <div class="symrow">
                <svg class="preview" viewBox="0 0 100 100"><path d="M50.500 0v100M0 50.500h100" stroke="#a0a0a0"/><circle cx="51" cy="51" r="4" fill="#dc1f2c" stroke="#7c1a22"/></svg>
                <div class="stree">
                  <div class="mrow hd"><i class="a"></i><i class="dot purple big"></i><b>Marke</b></div>
                  <div class="mrow sub"><i class="dot red"></i><span>Sim</span></div>
                  <div class="hs"><i class="sb left"></i><i class="thumb"></i><i class="trk w10"></i><i class="sb right"></i></div>
                </div>
                <div class="sbtns"><span><svg class="i14" viewBox="0 0 14 14"><path d="M5 1h4v4h4v4H9v4H5V9H1V5h4z" fill="#fff" stroke="#4b8a56" stroke-width="1.400"/><path d="M7 3v8M3 7h8" stroke="#4b8a56"/></svg></span><span class="off"><svg class="i14" viewBox="0 0 14 14"><path d="M1 5.500h12v3H1z" fill="#fff" stroke="#977"/></svg></span><span class="off"><svg class="i14" viewBox="0 0 14 14"><path d="M4 1h9v9H4zM1 4v9h9" fill="#fff" stroke="#777"/></svg></span></div>
              </div>
              <div class="rule"></div>
              <div class="frow unit"><label>Unit</label><div class="combo"><span class="tight">Millimeters</span></div></div>
              <div class="frow opac"><label>Opacity</label><div class="slider"><i></i><b></b></div><div class="spin"><span>100.0 %</span></div></div>
              <div class="frow colr"><label>Color</label><div class="colorbtn"><i></i></div></div>
            </div>
            <div class="vs"><i class="sb up"></i><i class="thumb"></i><i class="trk"></i><i class="sb down"></i></div>
          </div>
          <div class="hs shs"><i class="sb left"></i><i class="thumb"></i><i class="trk"></i><i class="sb right"></i></div>
          <div class="apply"><span class="sq orange"><svg class="i16"><use href="#undo"/></svg></span><span class="sq green"><svg class="i16"><use href="#redo"/></svg></span><svg class="ck2"><use href="#check"/></svg><span class="t-lu">Live update</span><span class="applyb">Apply</span></div>
        </div>
      </div>
      <div class="hsplit"><i></i></div>
      <div class="phead dp"><span>DataPlotly</span><svg class="pb"><use href="#float"/></svg><svg class="pb"><use href="#close"/></svg></div>
      <div class="plotrow">
        <div class="plotc">
          <div class="ptabs"><div><svg class="i24"><use href="#brush"/></svg></div><svg class="gear"><use href="#gears"/></svg></div>
          <div class="pbody">
            <div class="ptype"><span>Plot type</span><div class="combo"><svg class="i14" viewBox="0 0 14 14"><path d="M1 13C4 6 8 4 13 5" stroke="#d88" fill="none"/><path d="M1 10h1.500M2 6h1.500M5 3h1.500M8 1h1.500M12 2h1.500M11 8h1.500M4 8h1.500" stroke="#44c" stroke-width="1.300"/></svg><span class="t-sp">Scatter Plot</span></div></div>
            <div class="pp"><i class="tri"></i><b>Plot Parameters</b></div>
            <div class="gb"></div>
          </div>
        </div>
        <div class="vs"><i class="sb up"></i><i class="thumb"></i><i class="sb down"></i></div>
      </div>
      <div class="hs phs"><i class="sb left"></i><i class="thumb"></i><i class="trk"></i><i class="sb right"></i></div>
    </section>
  </main>

  <footer class="status">
    <div class="field search"><svg class="i14" viewBox="0 0 14 14"><circle cx="6" cy="6" r="4.300" fill="none" stroke="#888" stroke-width="1.300"/><path d="M9 9l4 4" stroke="#888" stroke-width="1.600"/></svg><span>Type to locate (Ctrl+K)</span></div>
    <span class="lab l1">oordinat</span>
    <div class="field f1"><span>37.312,-1.417</span></div>
    <svg class="ext" viewBox="0 0 18 18"><path d="M3 5l2-3 2 2 2-3 2 3 1 5 4 2 0 4-4 2-5-2-3-6z" fill="#ddd" stroke="#222" stroke-width="1.300"/><path d="M4 4l5 6M7 3l4 6M3 8l6 6M12 5l4-3M12 8l4-1M10 12l3 3M5 14l3-4" stroke="#222" stroke-width="1.200"/></svg>
    <span class="lab l2">cal</span>
    <div class="field f2"><span>1:833025</span><i class="dd"><i class="a"></i></i></div>
    <svg class="lock" viewBox="0 0 14 16"><path d="M3.500 7V4.500c0-4.500 7-4.500 7 0V7" fill="none" stroke="#888" stroke-width="1.800"/><rect x="1" y="7" width="12" height="8.500" rx="1.500" fill="#555"/></svg>
    <span class="lab l3">agnifie</span>
    <div class="field f3"><span>100%</span><i class="ud"></i></div>
    <span class="lab l4">otatio</span>
    <div class="field f4"><span>0.0 °</span><i class="ud"></i></div>
    <svg class="ck3"><use href="#check"/></svg><span class="lab l5">Render</span>
    <svg class="crs" viewBox="0 0 16 16"><circle cx="8" cy="8" r="6.500" fill="#888"/><path d="M0 8l3-3 10-1 3 4-3 4H3z" fill="#777"/><path d="M1 8h14M3 4.500h10M3 11.500h10M8 1v14M5 2c-2 4-2 8 0 12M11 2c2 4 2 8 0 12" stroke="#ddd" stroke-width=".8" fill="none"/></svg><span class="lab l6">EPSG:4326</span>
    <svg class="bub" viewBox="0 0 16 15"><path d="M8 .5c5 0 7.500 2.500 7.500 5.500S13 11 11 11.200L10 14.500 7 11.500C3 11.500.5 9 .5 6S3 .5 8 .5z" fill="#5c5c5c"/><path d="M3.500 6h2M7 6h2M10.500 6h2" stroke="#fff" stroke-width="2"/></svg>
    <i class="sizegrip"></i>
  </footer>
</div>
<div class="desktop"></div>
</div>
<script src="map.js"></script>
</body>
</html>
```

FILE: styles.css
```css
* { box-sizing: border-box; }
body { margin: 0; background: #f0f0f0; font-family: "Noto Sans", "Open Sans", sans-serif; font-size: 11px; color: #000; overflow: hidden; }
i { font-style: normal; }
svg { display: block; flex: none; }
.defs { position: absolute; }
.symbols { display: none; }
.ga { font: 12px "Noto Sans", sans-serif; fill: #444; }
.g11 { font: bold 9px "Liberation Sans", sans-serif; fill: #555; }
.gi { font: italic bold 15px "Liberation Serif", serif; fill: #fff; }
.gt { font: bold 7.5px "DejaVu Sans", sans-serif; fill: #333; }
.gr { font: bold 7.5px "DejaVu Sans", sans-serif; fill: #e11; }
.gq { font: bold 15px "Liberation Serif", serif; fill: #fff; }
.ge { font: bold 25px "Liberation Serif", serif; fill: #70406c; }

.screen { display: flex; width: 1003px; height: 628px; }
.window { width: 1001px; height: 628px; border-right: 1px solid #555; display: flex; flex-direction: column; }
.desktop { width: 2px; background: linear-gradient(#8fb8a2 0, #8fb8a2 64px, #c2408c 84px, #a5206c 160px, #d83a9a 230px, #b52a80 480px, #8fae9e 500px, #8fae9e 100%); }

.titlebar { height: 28px; flex: none; background: #fff; display: flex; align-items: flex-start; }
.logo { width: 16px; height: 16px; margin: 4px 5px 0 6px; }
.title { font-size: 12px; line-height: 16px; margin-top: 5px; flex: 1; white-space: nowrap; letter-spacing: -.35px; }
.winbtns { width: 120px; height: 28px; margin-right: 10px; }
.menubar { height: 20px; flex: none; padding-left: 8px; border-bottom: 1px solid #c9c9c9; display: grid; grid-template-columns: 50.5px 34.5px 39px 42px 56px 53px 47px 46px 62px 38px 43px 71px 60px; font-size: 12px; line-height: 19px; letter-spacing: -.35px; white-space: nowrap; }
.menubar u { text-underline-offset: 2px; text-decoration-thickness: 1px; text-decoration-skip-ink: none; }

.bar { height: 39px; flex: none; background: linear-gradient(#fbfbfb, #ededed); border-bottom: 1px solid #b4b4b4; display: flex; align-items: center; }
.bar:nth-of-type(3) { height: 38px; }
.c { width: 33px; height: 24px; }
.i24 { width: 24px; height: 24px; }
.i22 { width: 22px; height: 22px; }
.i18 { width: 18px; height: 18px; }
.i16 { width: 16px; height: 16px; }
.i14 { width: 14px; height: 14px; }
.off { opacity: .35; }
.brown { color: #a76a50; }
.grey { color: #777; }
.g { height: 17px; flex: none; display: flex; justify-content: flex-end; padding-right: 3px; }
.g::after { content: ""; width: 5px; height: 17px; background: conic-gradient(from 270deg at 1px 1px, #bcbcbc 90deg, transparent 0) 0 0 / 2px 3px; }
.w10 { width: 10px; } .w12 { width: 12px; } .w14 { width: 14px; } .w15 { width: 15px; } .w16 { width: 16px; } .w17 { width: 17px; }
.a { width: 12px; height: 5px; flex: none; background: #555; clip-path: polygon(2px 0, 10px 0, 6px 4.5px); }
.a.dim { opacity: .4; }
.s { width: 8px; height: 22px; flex: none; background: linear-gradient(#ccc, #ccc) center / 1px 100% no-repeat; }
.s.thin { width: 4px; }
.btn { width: 33px; height: 31px; flex: none; border: 1px solid #a5a5a5; border-radius: 3px; background: #dedede; display: flex; align-items: center; justify-content: center; }
.more { width: 14px; flex: none; text-align: center; font-size: 14px; line-height: 16px; }
.more.wide { width: 20px; }
.more.last { margin-left: auto; width: 20px; }

.main { height: 438px; flex: none; display: flex; }
.side { width: 49px; flex: none; background: linear-gradient(90deg, #fbfbfb, #ededed); display: flex; flex-direction: column; padding: 5px 0 0 6px; }
.hg { width: 17px; height: 5px; margin: 0 0 3px 11px; background: conic-gradient(from 270deg at 1px 1px, #bcbcbc 90deg, transparent 0) 0 0 / 3px 2px; }
.tool { height: 32px; display: flex; align-items: center; gap: 4px; }
.layers { width: 209px; flex: none; border-left: 2px solid #b4b4b4; display: flex; flex-direction: column; padding-bottom: 1px; }
.phead { height: 22px; flex: none; display: flex; align-items: center; gap: 4px; padding: 0 2px 0 3px; line-height: 16px; white-space: nowrap; font-size: 12px; letter-spacing: -.35px; }
.phead > span { flex: 1; }
.pb { width: 11px; height: 11px; }
.ltools { height: 29px; flex: none; padding: 2px 0 4px 3px; display: flex; align-items: center; }
.lbtn { width: 24px; height: 23px; flex: none; border: 1px solid #aaa; border-radius: 2px; background: #dedede; display: flex; align-items: center; justify-content: center; }
.l { width: 25px; height: 17px; }
.l.wl { width: 26px; }
.tree { flex: 1; background: #fff; border: 1px solid #b4b4b4; border-left: 0; overflow: hidden; }
.row { height: 18px; display: flex; align-items: center; white-space: nowrap; line-height: 17px; }
.row.sel { background: #0078d7; color: #fff; }
.exp { width: 12px; margin: 0 7px 0 4px; flex: none; }
.ck { width: 14px; height: 14px; flex: none; }
.sym { width: 28px; padding-left: 6px; flex: none; display: flex; align-items: center; }
.dot { width: 8px; height: 8px; flex: none; border-radius: 50%; border: 1px solid #61304d; background: #8f3a60; }
.dot.big { width: 10px; height: 10px; }
.sym .dot { margin-left: 4px; }
.dot.red { background: #dc1f2c; border-color: #8c1a22; width: 9px; height: 9px; }
.sw { width: 16px; height: 15px; }
.black { background: #000; }
.tan { background: #dcc78e; border: 1px solid #857a58; }
.nm { font-weight: bold; width: 138px; overflow: hidden; flex: none; font-size: 11.5px; letter-spacing: -.34px; padding-top: 2px; }
.n2 { width: 141px; letter-spacing: -.42px; }
.n2 + .edge { display: none; }
.val { font-size: 12px; letter-spacing: -.75px; padding-top: 2px; }
.edge { width: 3px; height: 15px; background: #e4e4e4; flex: none; margin-left: -1px; }
.hs { height: 15px; flex: none; display: flex; border: 1px solid #bbb; background: #e4e4e4; }
.sb { width: 13px; height: 13px; flex: none; background: #f8f8f8; display: flex; align-items: center; justify-content: center; }
.sb::after { content: ""; width: 8px; height: 8px; background: #555; }
.left { border-right: 1px solid #bbb; } .left::after { clip-path: polygon(6px 0, 6px 8px, 2px 4px); }
.right.sb { border-left: 1px solid #bbb; } .right.sb::after { clip-path: polygon(2px 0, 2px 8px, 6px 4px); }
.up { border-bottom: 1px solid #bbb; } .up::after { clip-path: polygon(0 6px, 8px 6px, 4px 2px); }
.down { border-top: 1px solid #bbb; } .down::after { clip-path: polygon(0 2px, 8px 2px, 4px 6px); }
.thumb { flex: 1; background: linear-gradient(#fff, #f2f2f2); border-right: 1px solid #bbb; }
.layers .hs { border-top: 0; border-left: 0; }
.split { width: 6px; flex: none; display: flex; align-items: center; justify-content: center; }
.vdots { width: 2px; height: 17px; background: conic-gradient(from 270deg at 1px 1px, #aaa 90deg, transparent 0) 0 0 / 3px 3px; }
.map { width: 456px; flex: none; margin: 1px 0; border: 1px solid #b4b4b4; background: #fff; }
.canvas { width: 454px; height: 434px; }
.split2 { width: 6px; flex: none; display: flex; align-items: center; justify-content: center; }

.right:not(.sb) { width: 274px; flex: none; display: flex; flex-direction: column; }
.right .phead { padding: 0 2px 0 4px; gap: 3px; }
.combo { border: 1px solid #aaa; border-radius: 3px; background: linear-gradient(#fdfdfd, #efefef); display: flex; align-items: center; white-space: nowrap; }
.tight { letter-spacing: -.55px; }
.layer .tight { letter-spacing: -.5px; padding-top: 1px; }
.layer { height: 24px; flex: none; margin: 1px 3px 6px; padding: 0 5px 0 6px; gap: 3px; }
.pts { width: 14px; height: 14px; }
.push { margin-left: auto; }
.styling { height: 288px; flex: none; padding: 0 3px; display: flex; gap: 3px; }
.tabs { width: 38px; flex: none; display: flex; flex-direction: column; }
.tabtop { height: 32px; padding: 4px 0 0 6px; }
.tabdark { flex: 1; margin-bottom: 1px; background: #5c5c5c; padding: 7px 0 0 4px; display: flex; flex-direction: column; gap: 8px; }
.tabdark .i24 { width: 22px; margin-top: 0; }
.stylecol { flex: 1; display: flex; flex-direction: column; min-width: 0; }
.scrollrow { height: 244px; flex: none; display: flex; }
.content { width: 213px; flex: none; overflow: hidden; display: flex; flex-direction: column; }
.single { height: 24px; flex: none; border-right: 0; border-radius: 3px 0 0 3px; padding-left: 7px; gap: 2px; }
.ss { width: 14px; height: 14px; }
.symrow { height: 148px; flex: none; display: flex; padding-top: 6px; }
.preview { width: 100px; height: 100px; margin: 18px 6px 0 0; }
.stree { width: 84px; height: 136px; flex: none; border: 1px solid #aaa; background: #fff; display: flex; flex-direction: column; overflow: hidden; }
.mrow { height: 18px; flex: none; display: flex; align-items: center; font-size: 12px; letter-spacing: -.35px; line-height: 18px; white-space: nowrap; }
.hd { background: #f0f0f0; padding-left: 4px; gap: 10px; }
.hd b { margin-left: -1px; padding-top: 1px; }
.sub { padding-left: 46px; gap: 10px; flex: 1; align-items: flex-start; }
.sub .dot { margin-top: 5px; }
.stree .hs { border-width: 1px 0 0; height: 15px; }
.sbtns { margin-left: 6px; display: flex; flex-direction: column; gap: 5px; padding-top: 1px; }
.sbtns span { width: 28px; height: 24px; border: 1px solid #999; border-radius: 3px; background: #f6f6f6; padding: 4px 0 0 6px; }
.rule { height: 2px; flex: none; border-top: 1px solid #aaa; background: #fff; }
.frow { flex: none; display: flex; align-items: center; white-space: nowrap; }
.frow label { width: 37px; flex: none; letter-spacing: -.3px; margin-left: -1px; }
.unit { height: 23px; margin-top: 7px; }
.unit .combo { flex: 1; height: 22px; margin-left: 1px; border-right: 0; border-radius: 3px 0 0 3px; padding-left: 3px; }
.opac { height: 20px; margin-top: 0; }
.slider { width: 94px; flex: none; margin: -3px 4px 0 1px; display: flex; align-items: center; }
.slider i { width: 81px; height: 5px; background: #2492ec; border: 1px solid #0b5ca5; border-radius: 2px; }
.slider b { width: 13px; height: 13px; background: #fff; border: 1px solid #999; border-radius: 3px; }
.spin { flex: 1; height: 20px; border: 1px solid #aaa; border-right: 0; border-radius: 3px 0 0 3px; background: #fff; padding-left: 4px; line-height: 20px; }
.colr { height: 24px; margin-top: 0; }
.colorbtn { flex: 1; height: 24px; margin-left: 1px; border: 1px solid #aaa; border-right: 0; border-radius: 3px 0 0 3px; background: #f8f8f8; padding: 2px 0 0 4px; }
.colorbtn i { display: block; height: 20px; background: #dc1f2c; border-radius: 3px 0 0 3px; }
.vs { width: 14px; flex: none; display: flex; flex-direction: column; background: #e4e4e4; border-left: 1px solid #bbb; }
.vs .thumb { border-right: 0; border-bottom: 1px solid #bbb; background: linear-gradient(90deg, #fff, #f2f2f2); }
.vs .trk { height: 28px; }
.shs { width: 214px; height: 14px; border-width: 0 1px 0 0; border-top: 1px solid #bbb; }
.shs .trk { width: 34px; }
.apply { height: 24px; margin-top: 5px; display: flex; align-items: center; }
.sq { width: 24px; height: 23px; flex: none; border: 1px solid #aaa; border-radius: 3px; background: #fafafa; margin-right: 6px; display: flex; align-items: center; justify-content: center; }
.orange { color: #e87a35; } .green { color: #78b385; }
.ck2 { width: 14px; height: 14px; margin-right: 4px; }
.t-lu { letter-spacing: -.3px; }
.applyb { width: 80px; height: 22px; margin-left: auto; border: 1px solid #aaa; border-radius: 3px; background: linear-gradient(#fdfdfd, #efefef); text-align: center; line-height: 20px; font-size: 11.5px; letter-spacing: -.3px; }
.hsplit { height: 7px; flex: none; display: flex; padding: 2px 0 0 130px; }
.hsplit i { width: 17px; height: 2px; background: conic-gradient(from 270deg at 1px 1px, #aaa 90deg, transparent 0) 0 0 / 3px 3px; }
.phead.dp { height: 20px; margin-top: 1px; }
.plotrow { height: 55px; flex: none; display: flex; }
.plotc { width: 260px; flex: none; padding-left: 3px; display: flex; overflow: hidden; }
.ptabs { width: 38px; flex: none; }
.ptabs div { height: 35px; padding: 6px 0 0 6px; }
.gear { width: 38px; height: 20px; background: #5c5c5c; }
.pbody { flex: 1; padding: 3px 0 0 5px; display: flex; flex-direction: column; white-space: nowrap; }
.ptype { height: 24px; display: flex; align-items: center; letter-spacing: -.15px; }
.ptype > span { width: 50px; flex: none; }
.ptype .combo { flex: 1; height: 24px; border-right: 0; border-radius: 3px 0 0 3px; padding-left: 7px; gap: 2px; }
.pp { height: 24px; display: flex; align-items: center; gap: 7px; padding: 2px 0 0 4px; font-size: 12px; letter-spacing: -.35px; }
.tri { width: 11px; height: 7px; margin-top: 2px; background: #222; clip-path: polygon(0 0, 100% 0, 50% 100%); }
.gb { flex: 1; border-top: 1px solid #ccc; border-left: 1px solid #ccc; margin-left: 2px; }
.phs { width: 261px; height: 14px; border-width: 1px 1px 0 0; }
.phs .trk { width: 94px; }

.status { flex: 1; display: flex; align-items: center; padding: 0 0 1px 2px; white-space: nowrap; line-height: 18px; }
.status .field > span, .lab { padding-top: 1px; }
.field { height: 22px; flex: none; border: 1px solid #aaa; border-radius: 3px; background: #fff; display: flex; align-items: center; padding-left: 5px; }
.search { width: 200px; color: #777; padding-left: 7px; gap: 6px; margin-right: 41px; letter-spacing: -.13px; }
.lab { flex: none; overflow: hidden; }
.l1 { width: 43px; letter-spacing: -.3px; } .f1 { width: 85px; }
.ext { width: 17px; height: 17px; margin: 0 11px 0 4px; }
.l2 { width: 17px; } .f2 { width: 80px; padding-left: 4px; }
.dd { margin-left: auto; width: 19px; height: 20px; border-left: 1px solid #bbb; display: flex; align-items: center; padding-left: 3px; }
.lock { width: 14px; height: 16px; margin: 0 8px 0 12px; }
.l3 { width: 33px; letter-spacing: -.5px; } .f3 { width: 88px; margin-right: 8px; }
.ud { margin-left: auto; width: 14px; height: 20px; border-left: 1px solid #bbb; display: flex; flex-direction: column; align-items: center; justify-content: center; gap: 3px; }
.ud::before, .ud::after { content: ""; width: 8px; height: 4px; background: #555; clip-path: polygon(0 100%, 100% 100%, 50% 0); }
.ud::after { clip-path: polygon(0 0, 100% 0, 50% 100%); }
.l4 { width: 38px; letter-spacing: -.3px; } .f4 { width: 84px; }
.ck3 { width: 14px; height: 14px; margin: 0 4px 0 6px; }
.l5 { width: 53px; letter-spacing: -.2px; }
.crs { width: 16px; height: 16px; margin-right: 3px; }
.l6 { width: 73px; letter-spacing: -.1px; }
.bub { width: 17px; height: 16px; }
.sizegrip { width: 11px; height: 11px; margin: 11px 0 0 auto; background: conic-gradient(from 270deg at 1px 1px, #aaa 90deg, transparent 0) 0 0 / 3px 3px; clip-path: polygon(100% 0, 100% 100%, 0 100%); }
```

FILE: map.js
```js
// Population density cells: seeded scatter inside areas and around clusters.
let seed = 4326;
const rnd = () => {
  seed = (seed * 1664525 + 1013904223) >>> 0;
  return seed / 4294967296;
};
const gauss = () => rnd() + rnd() + rnd() + rnd() - 2;

// [x0, y0, x1, y1, edge softness, count]
const areas = [
  [327, 283, 342, 315, 3, 75], [332, 300, 350, 322, 2, 65], [328, 335, 348, 356, 5, 45],
  [336, 352, 356, 384, 6, 75], [338, 365, 350, 430, 4, 130], [338, 380, 352, 430, 3, 60],
  [320, 412, 340, 460, 4, 60], [322, 455, 370, 512, 6, 330], [332, 430, 352, 475, 5, 100],
  [376, 356, 395, 380, 5, 60], [382, 375, 500, 400, 10, 560], [408, 335, 500, 375, 8, 520],
  [425, 300, 455, 330, 8, 150], [450, 308, 480, 335, 8, 170], [475, 330, 505, 400, 8, 230],
  [370, 398, 440, 425, 6, 230], [435, 400, 478, 445, 8, 150], [366, 425, 440, 475, 7, 330],
  [440, 425, 475, 465, 6, 90], [500, 355, 540, 395, 8, 80], [485, 400, 555, 425, 8, 60]
];
// [cx, cy, sx, sy, count]
const clusters = [
  [342, 423, 6, 5, 60], [353, 422, 4, 4, 45], [345, 390, 8, 28, 110], [328, 339, 3, 3, 16],
  [417, 395, 5, 3, 35], [398, 408, 9, 5, 60], [433, 431, 5, 4, 35], [345, 506, 20, 8, 100],
  [365, 480, 14, 12, 90], [343, 460, 12, 24, 110], [405, 455, 28, 14, 130],
  [572, 393, 20, 12, 190], [567, 386, 9, 6, 50], [577, 402, 7, 7, 60], [551, 385, 8, 5, 50],
  [602, 397, 4, 7, 60], [616, 398, 8, 8, 40], [560, 411, 18, 9, 80], [604, 417, 9, 8, 35],
  [537, 415, 10, 14, 80], [530, 435, 20, 14, 240], [508, 427, 6, 9, 70], [498, 419, 9, 4, 30],
  [535, 445, 28, 12, 130], [573, 446, 20, 14, 70], [562, 437, 4, 4, 22], [500, 464, 10, 6, 50],
  [514, 471, 6, 5, 40], [655, 396, 20, 5, 50], [672, 398, 4, 3, 16], [690, 408, 10, 7, 12],
  [528, 392, 10, 9, 40], [367, 293, 8, 5, 2]
];

let d = "";
const cell = (x, y) => { d += `M${Math.floor(x)} ${Math.floor(y)}h1v1h-1z`; };
for (const [x0, y0, x1, y1, soft, n] of areas)
  for (let i = 0; i < n; i++)
    cell(x0 + rnd() * (x1 - x0) + gauss() * soft, y0 + rnd() * (y1 - y0) + gauss() * soft);
for (const [cx, cy, sx, sy, n] of clusters)
  for (let i = 0; i < n; i++) cell(cx + gauss() * sx, cy + gauss() * sy);
document.getElementById("density").setAttribute("d", d);
```
